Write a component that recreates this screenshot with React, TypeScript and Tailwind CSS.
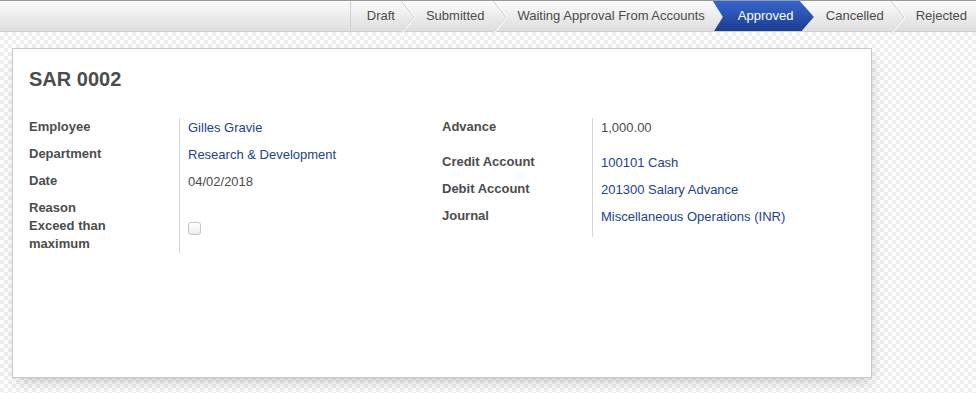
import React from "react";

const Chevron = () => (
    <svg width="14" height="32" viewBox="0 0 14 32" className="shrink-0 block">
        <polyline points="0.5,0 13.5,16 0.5,32" fill="none" stroke="#ffffff" strokeWidth="2" />
        <polyline points="0,0 13,16 0,32" fill="none" stroke="#c9c9c9" strokeWidth="1" />
    </svg>
);

const Row = ({ label, children, className = "" }: { label: React.ReactNode; children?: React.ReactNode; className?: string }) => (
    <div className="flex">
        <div className="w-[150px] shrink-0 font-bold leading-[18px] text-[#4c4c4c]">{label}</div>
        <div className={"flex-1 border-l border-[#d6d6d6] pl-2 leading-[18px] " + className}>{children}</div>
    </div>
);

export default function App() {
    return (
        <div
            className="w-[976px] h-[393px] text-[13px] text-[#4c4c4c] overflow-hidden bg-[repeating-conic-gradient(#efefef_0_25%,#ffffff_0_50%)] bg-[length:8px_8px]"
            style={{ fontFamily: '"Liberation Sans", Arial, sans-serif' }}
        >
            {/* status bar */}
            <div className="h-8 flex justify-end items-stretch border-t border-[#9a9a9a] border-b border-b-[#cfcfcf] bg-gradient-to-b from-[#fbfbfb] to-[#dedede]">
                <div className="flex items-stretch">
                    <div className="flex items-center border-l border-[#d2d2d2] pl-4 pr-[6px]">Draft</div>
                    <Chevron />
                    <div className="flex items-center pl-[11px] pr-[9px]">Submitted</div>
                    <Chevron />
                    <div className="flex items-center pl-[10px] pr-[8px]">Waiting Approval From Accounts</div>
                    <div className="flex items-center w-[101px] pl-[25px] text-white bg-gradient-to-b from-[#3766cc] to-[#1c3d93] [clip-path:polygon(0_0,87px_0,101px_16px,87px_32px,0_32px,10px_16px)]">
                        Approved
                    </div>
                    <div className="flex items-center pl-3 pr-[7px]">Cancelled</div>
                    <Chevron />
                    <div className="flex items-center pl-[11px] pr-[9px]">Rejected</div>
                </div>
            </div>

            {/* sheet */}
            <div className="mt-4 ml-3 w-[860px] h-[330px] bg-white border border-[#c9c8d2] shadow-[2px_6px_14px_-4px_rgba(0,0,0,0.25)] px-4">
                <h1 className="mt-[18px] text-[20px] leading-6 font-bold text-[#4c4c4c]">SAR 0002</h1>
                <div className="mt-[27px] grid grid-cols-2">
                    <div className="flex flex-col">
                        <Row label="Employee" className="pt-px pb-[8px] text-[#21428f]">Gilles Gravie</Row>
                        <Row label="Department" className="pt-px pb-[8px] text-[#21428f]">Research &amp; Development</Row>
                        <Row label="Date" className="pt-px pb-[8px]">04/02/2018</Row>
                        <Row label="Reason" />
                        <Row label={<>Exceed than<br />maximum</>}>
                            <div className="mt-[5px] w-[13px] h-[13px] rounded-[3px] border border-[#c4c4c4] bg-gradient-to-b from-[#ffffff] to-[#ececec]" />
                        </Row>
                    </div>
                    <div className="flex flex-col">
                        <Row label="Advance" className="pt-px pb-[16px]">1,000.00</Row>
                        <Row label="Credit Account" className="pt-px pb-[8px] text-[#21428f]">100101 Cash</Row>
                        <Row label="Debit Account" className="pt-px pb-[8px] text-[#21428f]">201300 Salary Advance</Row>
                        <Row label="Journal" className="pt-px pb-[11px] text-[#21428f]">Miscellaneous Operations (INR)</Row>
                    </div>
                </div>
            </div>
        </div>
    );
}
